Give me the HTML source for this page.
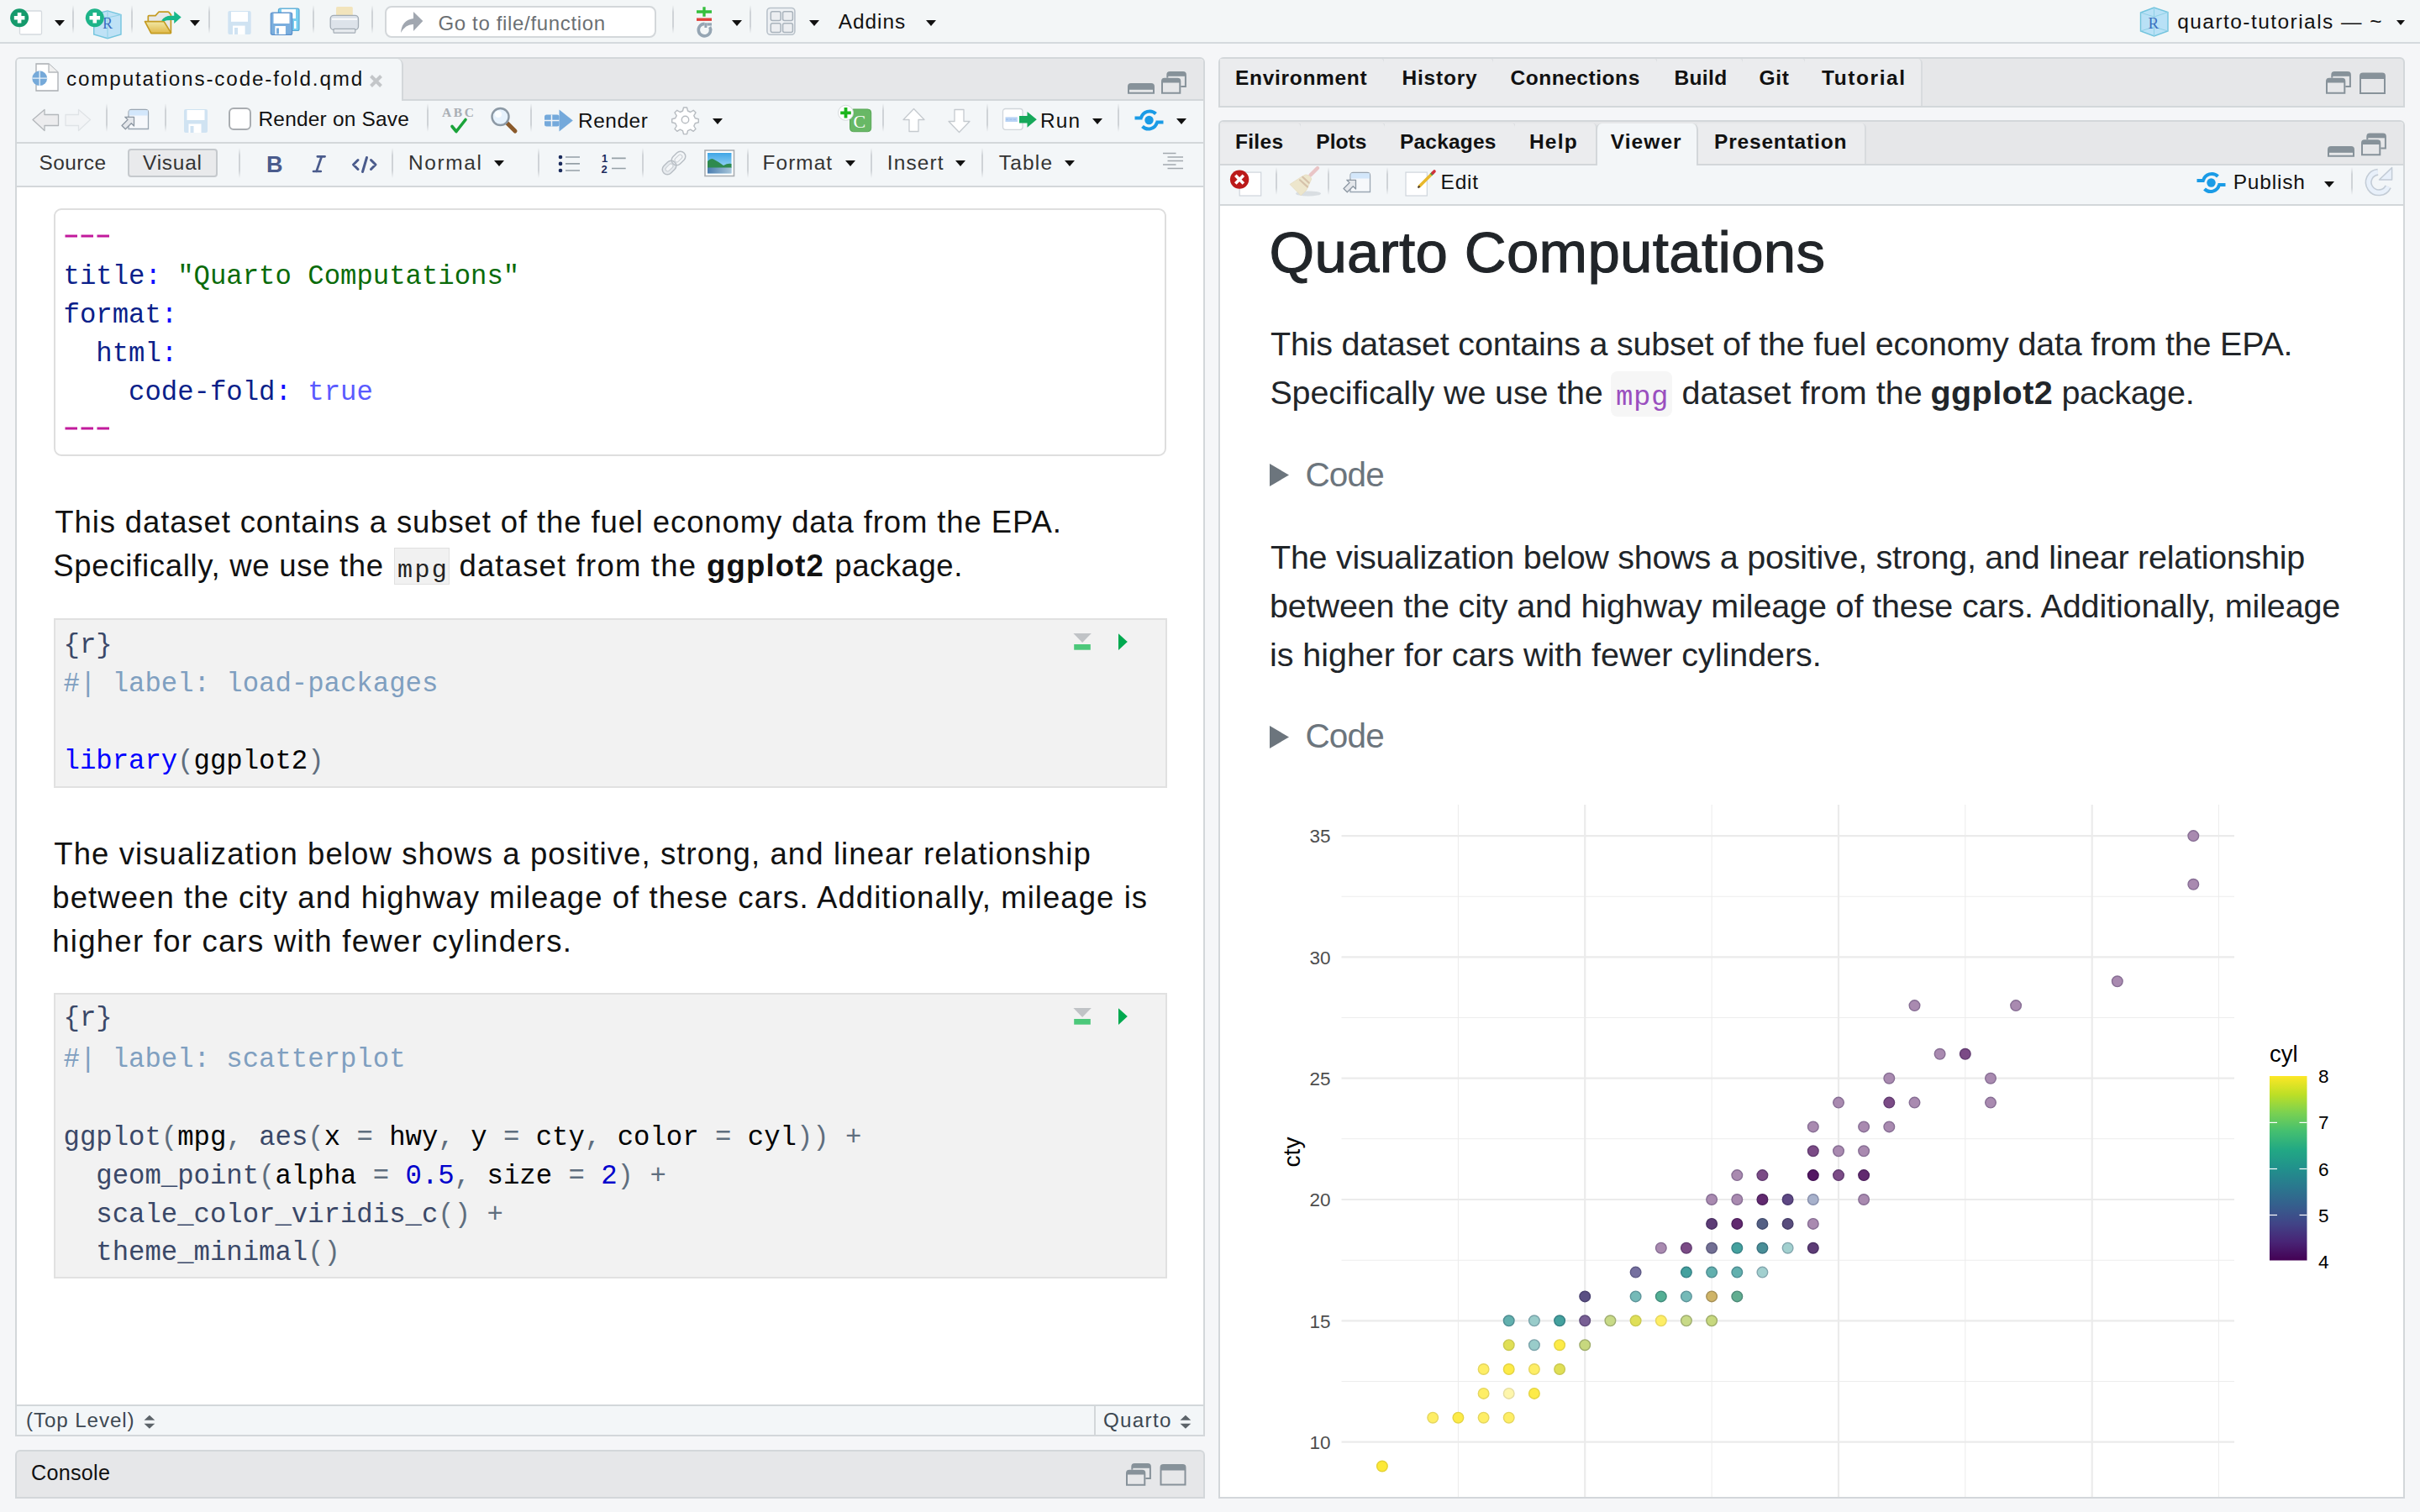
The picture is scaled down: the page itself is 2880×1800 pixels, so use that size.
<!DOCTYPE html>
<html><head><meta charset="utf-8">
<style>
*{margin:0;padding:0;box-sizing:border-box}
html,body{width:2880px;height:1800px;overflow:hidden;background:#f5f6f8;font-family:"Liberation Sans",sans-serif;color:#000}
.a{position:absolute}
.t{position:absolute;white-space:pre;line-height:1}
.code{position:absolute;white-space:pre;line-height:1;font-family:"Liberation Mono",monospace;font-size:32.3px}
.sep{position:absolute;width:2px;background:linear-gradient(rgba(200,204,208,0),#cfd3d7 25%,#cfd3d7 75%,rgba(200,204,208,0))}
.dd{position:absolute;width:0;height:0;border-left:6px solid transparent;border-right:6px solid transparent;border-top:7px solid #111}
.pane{position:absolute;border:2px solid #d3d7da;border-radius:6px 6px 0 0;overflow:hidden}
.strip{position:absolute;background:#e6e7e9}
.tbar{position:absolute;background:#f3f6f8}
.hline{position:absolute;height:2px;background:#d3d7da}
.vline{position:absolute;width:2px;background:#d3d7da}
.tab{position:absolute;background:#ebecee;border-right:2px solid #d8dbde;border-radius:0 5px 0 0}
svg{position:absolute;overflow:visible}
/* yaml/code colors */
.yk{color:#0b1f8a}.yc{color:#1010ff}.ys{color:#0a6b0a}.yt{color:#5a5aff}.yd{color:#c21a9c}
.hd{color:#3a4868}.cm{color:#7f9fc0}.fn{color:#3a4868}.pn{color:#5f6e7e}.kw{color:#0000ff}.nu{color:#0000cc}.tx{color:#000}
</style></head>
<body>
<!-- ================= TOP TOOLBAR ================= -->
<div class="a" style="left:0;top:0;width:2880px;height:50px;background:#f3f6f7"></div>
<div class="a" style="left:0;top:50px;width:2880px;height:2px;background:#d5d9dd"></div>
<div class="sep" style="left:86px;top:6px;height:34px"></div>
<div class="sep" style="left:156px;top:6px;height:34px"></div>
<div class="sep" style="left:248px;top:6px;height:34px"></div>
<div class="sep" style="left:372px;top:6px;height:34px"></div>
<div class="sep" style="left:442px;top:6px;height:34px"></div>
<div class="a" style="left:458px;top:7px;width:323px;height:38px;background:#fff;border:2px solid #d3d7da;border-radius:8px"></div>
<div class="sep" style="left:800px;top:6px;height:34px"></div>
<div class="sep" style="left:892px;top:6px;height:34px"></div>
<div class="dd" style="left:65px;top:24px"></div>
<div class="dd" style="left:226px;top:24px"></div>
<div class="dd" style="left:871px;top:24px"></div>
<div class="dd" style="left:963px;top:24px"></div>
<div class="dd" style="left:1102px;top:24px"></div>
<div class="dd" style="left:2852px;top:24px;border-left-width:5px;border-right-width:5px;border-top-width:6px"></div>
<!--TOPICONS-->

<!-- ================= LEFT PANE ================= -->
<div class="pane" style="left:18px;top:68px;width:1416px;height:1642px;background:#fff">
  <div class="strip" style="left:0;top:0;width:1412px;height:48px"></div>
  <div class="a" style="left:0;top:0;width:460px;height:50px;background:#f3f6f8;border-right:2px solid #d3d7da;border-radius:0 7px 0 0"></div>
  <div class="tbar" style="left:0;top:50px;width:1412px;height:49px"></div>
  <div class="hline" style="left:460px;top:48px;width:952px"></div>
  <div class="hline" style="left:0;top:99px;width:1412px"></div>
  <div class="tbar" style="left:0;top:101px;width:1412px;height:50px"></div>
  <div class="hline" style="left:0;top:151px;width:1412px"></div>
  <div class="hline" style="left:0;top:1602px;width:1412px"></div>
  <div class="tbar" style="left:0;top:1604px;width:1412px;height:36px"></div>
  <div class="vline" style="left:1282px;top:1604px;height:36px"></div>
</div>
<!-- toolbar 1 separators -->
<div class="sep" style="left:126px;top:123px;height:34px"></div>
<div class="sep" style="left:196px;top:123px;height:34px"></div>
<div class="sep" style="left:508px;top:123px;height:34px"></div>
<div class="sep" style="left:631px;top:123px;height:34px"></div>
<div class="sep" style="left:1050px;top:123px;height:34px"></div>
<div class="sep" style="left:1174px;top:123px;height:34px"></div>
<div class="sep" style="left:1330px;top:123px;height:34px"></div>
<div class="dd" style="left:848px;top:141px"></div>
<div class="dd" style="left:1300px;top:141px"></div>
<div class="dd" style="left:1400px;top:141px"></div>
<!-- checkbox -->
<div class="a" style="left:272px;top:128px;width:27px;height:27px;background:#fff;border:2px solid #a9adb1;border-radius:6px"></div>
<!-- toolbar 2 -->
<div class="a" style="left:152px;top:177px;width:107px;height:34px;background:#e9eaec;border:2px solid #c5c9cd;border-radius:4px"></div>
<div class="sep" style="left:284px;top:176px;height:36px"></div>
<div class="sep" style="left:466px;top:176px;height:36px"></div>
<div class="sep" style="left:640px;top:176px;height:36px"></div>
<div class="sep" style="left:764px;top:176px;height:36px"></div>
<div class="sep" style="left:889px;top:176px;height:36px"></div>
<div class="sep" style="left:1036px;top:176px;height:36px"></div>
<div class="sep" style="left:1168px;top:176px;height:36px"></div>
<div class="dd" style="left:588px;top:191px"></div>
<div class="dd" style="left:1006px;top:191px"></div>
<div class="dd" style="left:1137px;top:191px"></div>
<div class="dd" style="left:1267px;top:191px"></div>

<!-- console -->
<div class="pane" style="left:18px;top:1726px;width:1416px;height:58px;background:#e6e7e9;border-bottom:2px solid #d3d7da"></div>

<!-- editor content -->
<div class="a" style="left:64px;top:248px;width:1324px;height:295px;border:2px solid #dedede;border-radius:9px;background:#fff"></div>
<div class="a" style="left:468.5px;top:652px;width:66px;height:44px;background:#f1f1f1;border:1px solid #e0e0e0"></div>
<div class="a" style="left:64px;top:736px;width:1325px;height:202px;background:#f2f2f2;border:2px solid #e1e1e1"></div>
<div class="a" style="left:64px;top:1182px;width:1325px;height:340px;background:#f2f2f2;border:2px solid #e1e1e1"></div>


<div class="code" style="left:75.5px;top:314.3px"><span class="yk">title</span><span class="yc">:</span> <span class="ys">"Quarto Computations"</span></div>
<div class="code" style="left:75.5px;top:360.1px"><span class="yk">format</span><span class="yc">:</span></div>
<div class="code" style="left:75.5px;top:405.9px">  <span class="yk">html</span><span class="yc">:</span></div>
<div class="code" style="left:75.5px;top:451.7px">    <span class="yk">code-fold</span><span class="yc">:</span> <span class="yt">true</span></div>
<svg style="left:0;top:0" width="200" height="600"><path d="M77.5,281 H92 M96.5,281 H111 M115.5,281 H130 M77.5,510 H92 M96.5,510 H111 M115.5,510 H130" stroke="#c21a9c" stroke-width="3.2"/></svg>

<div class="code" style="left:75.5px;top:752.5px"><span class="hd">{r}</span></div>
<div class="code" style="left:75.5px;top:799.2px"><span class="cm">#| label: load-packages</span></div>
<div class="code" style="left:75.5px;top:891.1px"><span class="kw">library</span><span class="pn">(</span><span class="tx">ggplot2</span><span class="pn">)</span></div>

<div class="code" style="left:75.5px;top:1197px"><span class="hd">{r}</span></div>
<div class="code" style="left:75.5px;top:1246.4px"><span class="cm">#| label: scatterplot</span></div>
<div class="code" style="left:75.5px;top:1339.3px"><span class="fn">ggplot</span><span class="pn">(</span><span class="tx">mpg</span><span class="pn">,</span> <span class="fn">aes</span><span class="pn">(</span><span class="tx">x</span> <span class="pn">=</span> <span class="tx">hwy</span><span class="pn">,</span> <span class="tx">y</span> <span class="pn">=</span> <span class="tx">cty</span><span class="pn">,</span> <span class="tx">color</span> <span class="pn">=</span> <span class="tx">cyl</span><span class="pn">))</span> <span class="pn">+</span></div>
<div class="code" style="left:75.5px;top:1385.1px">  <span class="fn">geom_point</span><span class="pn">(</span><span class="tx">alpha</span> <span class="pn">=</span> <span class="nu">0.5</span><span class="pn">,</span> <span class="tx">size</span> <span class="pn">=</span> <span class="nu">2</span><span class="pn">)</span> <span class="pn">+</span></div>
<div class="code" style="left:75.5px;top:1430.7px">  <span class="fn">scale_color_viridis_c</span><span class="pn">()</span> <span class="pn">+</span></div>
<div class="code" style="left:75.5px;top:1476.2px">  <span class="fn">theme_minimal</span><span class="pn">()</span></div>
<!--CHUNKICONS-->

<!-- ================= RIGHT TOP PANE ================= -->
<div class="pane" style="left:1450px;top:68px;width:1412px;height:60px;background:#e6e7e9;border-bottom:2px solid #d3d7da"></div>
<div class="tab" style="left:1452px;top:70px;width:197px;height:56px;border-left:none"></div>
<div class="tab" style="left:1647px;top:70px;width:132px;height:56px"></div>
<div class="tab" style="left:1777px;top:70px;width:197px;height:56px"></div>
<div class="tab" style="left:1972px;top:70px;width:104px;height:56px"></div>
<div class="tab" style="left:2074px;top:70px;width:76px;height:56px"></div>
<div class="tab" style="left:2148px;top:70px;width:140px;height:56px"></div>

<!-- ================= RIGHT BOTTOM PANE ================= -->
<div class="pane" style="left:1450px;top:143px;width:1412px;height:1641px;background:#fff;border-bottom:2px solid #d3d7da">
  <div class="strip" style="left:0;top:0;width:1408px;height:50px"></div>
  <div class="tab" style="left:0;top:2px;width:98px;height:48px;border-left:none"></div>
  <div class="tab" style="left:96px;top:2px;width:102px;height:48px"></div>
  <div class="tab" style="left:196px;top:2px;width:157px;height:48px"></div>
  <div class="tab" style="left:351px;top:2px;width:98px;height:48px"></div>
  <div class="tab" style="left:568px;top:2px;width:201px;height:48px"></div>
  <div class="hline" style="left:0;top:50px;width:447px"></div>
  <div class="hline" style="left:569px;top:50px;width:839px"></div>
  <div class="tbar" style="left:447px;top:2px;width:122px;height:50px;border-left:2px solid #d3d7da;border-right:2px solid #d3d7da;border-radius:7px 7px 0 0"></div>
  <div class="tbar" style="left:0;top:52px;width:1408px;height:46px"></div>
  <div class="hline" style="left:0;top:98px;width:1408px"></div>
</div>
<div class="sep" style="left:1518px;top:199px;height:33px"></div>
<div class="sep" style="left:1580px;top:199px;height:33px"></div>
<div class="sep" style="left:1650px;top:199px;height:33px"></div>
<div class="sep" style="left:2798px;top:199px;height:33px"></div>
<div class="dd" style="left:2766px;top:216px"></div>
<!-- viewer: code bg + triangles -->
<div class="a" style="left:1916.5px;top:442px;width:73px;height:54px;background:#f6f6f6;border-radius:8px"></div>
<svg style="left:1511px;top:552px" width="23" height="27"><polygon points="0,0 23,13.5 0,27" fill="#6c757d"/></svg>
<svg style="left:1511px;top:864px" width="23" height="27"><polygon points="0,0 23,13.5 0,27" fill="#6c757d"/></svg>
<svg style="left:0;top:0" width="2880" height="1800">
<defs><clipPath id="vc"><rect x="1452" y="243" width="1408" height="1539"/></clipPath><linearGradient id="vir" x1="0" y1="1" x2="0" y2="0"><stop offset="0.0" stop-color="#440154"/><stop offset="0.1" stop-color="#482475"/><stop offset="0.2" stop-color="#414487"/><stop offset="0.3" stop-color="#355f8d"/><stop offset="0.4" stop-color="#2a788e"/><stop offset="0.5" stop-color="#21918c"/><stop offset="0.6" stop-color="#22a884"/><stop offset="0.7" stop-color="#44bf70"/><stop offset="0.8" stop-color="#7ad151"/><stop offset="0.9" stop-color="#bddf26"/><stop offset="1.0" stop-color="#fde725"/></linearGradient></defs><g clip-path="url(#vc)">
<line x1="1596.5" x2="2659" y1="1644.5" y2="1644.5" stroke="#ededed" stroke-width="1.1"/>
<line x1="1596.5" x2="2659" y1="1500.2" y2="1500.2" stroke="#ededed" stroke-width="1.1"/>
<line x1="1596.5" x2="2659" y1="1355.8" y2="1355.8" stroke="#ededed" stroke-width="1.1"/>
<line x1="1596.5" x2="2659" y1="1211.5" y2="1211.5" stroke="#ededed" stroke-width="1.1"/>
<line x1="1596.5" x2="2659" y1="1067.2" y2="1067.2" stroke="#ededed" stroke-width="1.1"/>
<line x1="1735.4" x2="1735.4" y1="958" y2="1790" stroke="#ededed" stroke-width="1.1"/>
<line x1="2037.1" x2="2037.1" y1="958" y2="1790" stroke="#ededed" stroke-width="1.1"/>
<line x1="2338.8" x2="2338.8" y1="958" y2="1790" stroke="#ededed" stroke-width="1.1"/>
<line x1="2640.5" x2="2640.5" y1="958" y2="1790" stroke="#ededed" stroke-width="1.1"/>
<line x1="1596.5" x2="2659" y1="1716.6" y2="1716.6" stroke="#ebebeb" stroke-width="2.2"/>
<line x1="1596.5" x2="2659" y1="1572.3" y2="1572.3" stroke="#ebebeb" stroke-width="2.2"/>
<line x1="1596.5" x2="2659" y1="1428.0" y2="1428.0" stroke="#ebebeb" stroke-width="2.2"/>
<line x1="1596.5" x2="2659" y1="1283.7" y2="1283.7" stroke="#ebebeb" stroke-width="2.2"/>
<line x1="1596.5" x2="2659" y1="1139.4" y2="1139.4" stroke="#ebebeb" stroke-width="2.2"/>
<line x1="1596.5" x2="2659" y1="995.1" y2="995.1" stroke="#ebebeb" stroke-width="2.2"/>
<line x1="1886.2" x2="1886.2" y1="958" y2="1790" stroke="#ebebeb" stroke-width="2.2"/>
<line x1="2188.0" x2="2188.0" y1="958" y2="1790" stroke="#ebebeb" stroke-width="2.2"/>
<line x1="2489.7" x2="2489.7" y1="958" y2="1790" stroke="#ebebeb" stroke-width="2.2"/>
<circle cx="1644.9" cy="1745.5" r="6.3" fill="#fde938" stroke="#e4d235" stroke-width="1.4"/>
<circle cx="1705.2" cy="1687.7" r="6.3" fill="#feee65" stroke="#e5d65f" stroke-width="1.4"/>
<circle cx="1735.4" cy="1687.7" r="6.3" fill="#fdeb47" stroke="#e4d443" stroke-width="1.4"/>
<circle cx="1765.6" cy="1687.7" r="6.3" fill="#feee65" stroke="#e5d65f" stroke-width="1.4"/>
<circle cx="1795.7" cy="1687.7" r="6.3" fill="#feee65" stroke="#e5d65f" stroke-width="1.4"/>
<circle cx="1765.6" cy="1658.9" r="6.3" fill="#feee65" stroke="#e5d65f" stroke-width="1.4"/>
<circle cx="1795.7" cy="1658.9" r="6.3" fill="#fef6ac" stroke="#e5dda2" stroke-width="1.4"/>
<circle cx="1825.9" cy="1658.9" r="6.3" fill="#fdeb47" stroke="#e4d443" stroke-width="1.4"/>
<circle cx="1765.6" cy="1630.0" r="6.3" fill="#feee65" stroke="#e5d65f" stroke-width="1.4"/>
<circle cx="1795.7" cy="1630.0" r="6.3" fill="#fdeb47" stroke="#e4d443" stroke-width="1.4"/>
<circle cx="1825.9" cy="1630.0" r="6.3" fill="#feee65" stroke="#e5d65f" stroke-width="1.4"/>
<circle cx="1856.1" cy="1630.0" r="6.3" fill="#e0df55" stroke="#cac950" stroke-width="1.4"/>
<circle cx="1795.7" cy="1601.2" r="6.3" fill="#e0df55" stroke="#cac950" stroke-width="1.4"/>
<circle cx="1825.9" cy="1601.2" r="6.3" fill="#99ccca" stroke="#7aa3aa" stroke-width="1.4"/>
<circle cx="1856.1" cy="1601.2" r="6.3" fill="#fdeb47" stroke="#e4d443" stroke-width="1.4"/>
<circle cx="1886.2" cy="1601.2" r="6.3" fill="#c7d87e" stroke="#9fad6a" stroke-width="1.4"/>
<circle cx="1795.7" cy="1572.3" r="6.3" fill="#62b0ae" stroke="#4e8d92" stroke-width="1.4"/>
<circle cx="1825.9" cy="1572.3" r="6.3" fill="#99ccca" stroke="#7aa3aa" stroke-width="1.4"/>
<circle cx="1856.1" cy="1572.3" r="6.3" fill="#44a19e" stroke="#368185" stroke-width="1.4"/>
<circle cx="1886.2" cy="1572.3" r="6.3" fill="#785f94" stroke="#604c7c" stroke-width="1.4"/>
<circle cx="1916.4" cy="1572.3" r="6.3" fill="#c8da87" stroke="#a0ae71" stroke-width="1.4"/>
<circle cx="1946.6" cy="1572.3" r="6.3" fill="#dfdf57" stroke="#c9c952" stroke-width="1.4"/>
<circle cx="1976.8" cy="1572.3" r="6.3" fill="#feee65" stroke="#e5d65f" stroke-width="1.4"/>
<circle cx="2006.9" cy="1572.3" r="6.3" fill="#c8da87" stroke="#a0ae71" stroke-width="1.4"/>
<circle cx="2037.1" cy="1572.3" r="6.3" fill="#c7d87e" stroke="#9fad6a" stroke-width="1.4"/>
<circle cx="1886.2" cy="1543.4" r="6.3" fill="#5b5084" stroke="#49406f" stroke-width="1.4"/>
<circle cx="1946.6" cy="1543.4" r="6.3" fill="#75bab8" stroke="#5e959b" stroke-width="1.4"/>
<circle cx="1976.8" cy="1543.4" r="6.3" fill="#53af94" stroke="#428c7c" stroke-width="1.4"/>
<circle cx="2006.9" cy="1543.4" r="6.3" fill="#75bab8" stroke="#5e959b" stroke-width="1.4"/>
<circle cx="2037.1" cy="1543.4" r="6.3" fill="#cfb467" stroke="#a69057" stroke-width="1.4"/>
<circle cx="2067.3" cy="1543.4" r="6.3" fill="#61ad90" stroke="#4e8a79" stroke-width="1.4"/>
<circle cx="1946.6" cy="1514.6" r="6.3" fill="#76709f" stroke="#5e5a86" stroke-width="1.4"/>
<circle cx="2006.9" cy="1514.6" r="6.3" fill="#44a19e" stroke="#368185" stroke-width="1.4"/>
<circle cx="2037.1" cy="1514.6" r="6.3" fill="#62b0ae" stroke="#4e8d92" stroke-width="1.4"/>
<circle cx="2067.3" cy="1514.6" r="6.3" fill="#62b0ae" stroke="#4e8d92" stroke-width="1.4"/>
<circle cx="2097.4" cy="1514.6" r="6.3" fill="#a2d0cf" stroke="#82a6ae" stroke-width="1.4"/>
<circle cx="1976.8" cy="1485.7" r="6.3" fill="#a98ab0" stroke="#876e94" stroke-width="1.4"/>
<circle cx="2006.9" cy="1485.7" r="6.3" fill="#7b4b86" stroke="#623c71" stroke-width="1.4"/>
<circle cx="2037.1" cy="1485.7" r="6.3" fill="#726f94" stroke="#5b597c" stroke-width="1.4"/>
<circle cx="2067.3" cy="1485.7" r="6.3" fill="#44a19e" stroke="#368185" stroke-width="1.4"/>
<circle cx="2097.4" cy="1485.7" r="6.3" fill="#498e97" stroke="#3a727f" stroke-width="1.4"/>
<circle cx="2127.6" cy="1485.7" r="6.3" fill="#a2d0cf" stroke="#82a6ae" stroke-width="1.4"/>
<circle cx="2157.8" cy="1485.7" r="6.3" fill="#5d3c76" stroke="#4a3063" stroke-width="1.4"/>
<circle cx="2037.1" cy="1456.9" r="6.3" fill="#5d3c76" stroke="#4a3063" stroke-width="1.4"/>
<circle cx="2067.3" cy="1456.9" r="6.3" fill="#61296f" stroke="#4e215d" stroke-width="1.4"/>
<circle cx="2097.4" cy="1456.9" r="6.3" fill="#546084" stroke="#434d6f" stroke-width="1.4"/>
<circle cx="2127.6" cy="1456.9" r="6.3" fill="#594d7d" stroke="#473e69" stroke-width="1.4"/>
<circle cx="2157.8" cy="1456.9" r="6.3" fill="#a98ab0" stroke="#876e94" stroke-width="1.4"/>
<circle cx="2037.1" cy="1428.0" r="6.3" fill="#a98ab0" stroke="#876e94" stroke-width="1.4"/>
<circle cx="2067.3" cy="1428.0" r="6.3" fill="#a98ab0" stroke="#876e94" stroke-width="1.4"/>
<circle cx="2097.4" cy="1428.0" r="6.3" fill="#61296f" stroke="#4e215d" stroke-width="1.4"/>
<circle cx="2127.6" cy="1428.0" r="6.3" fill="#5e4884" stroke="#4b3a6f" stroke-width="1.4"/>
<circle cx="2157.8" cy="1428.0" r="6.3" fill="#a7b1cb" stroke="#868eab" stroke-width="1.4"/>
<circle cx="2218.1" cy="1428.0" r="6.3" fill="#a98ab0" stroke="#876e94" stroke-width="1.4"/>
<circle cx="2067.3" cy="1399.1" r="6.3" fill="#a98ab0" stroke="#876e94" stroke-width="1.4"/>
<circle cx="2097.4" cy="1399.1" r="6.3" fill="#7b4b86" stroke="#623c71" stroke-width="1.4"/>
<circle cx="2157.8" cy="1399.1" r="6.3" fill="#541763" stroke="#431253" stroke-width="1.4"/>
<circle cx="2188.0" cy="1399.1" r="6.3" fill="#7b4b86" stroke="#623c71" stroke-width="1.4"/>
<circle cx="2218.1" cy="1399.1" r="6.3" fill="#61296f" stroke="#4e215d" stroke-width="1.4"/>
<circle cx="2157.8" cy="1370.3" r="6.3" fill="#7b4b86" stroke="#623c71" stroke-width="1.4"/>
<circle cx="2188.0" cy="1370.3" r="6.3" fill="#a98ab0" stroke="#876e94" stroke-width="1.4"/>
<circle cx="2218.1" cy="1370.3" r="6.3" fill="#a98ab0" stroke="#876e94" stroke-width="1.4"/>
<circle cx="2157.8" cy="1341.4" r="6.3" fill="#a98ab0" stroke="#876e94" stroke-width="1.4"/>
<circle cx="2218.1" cy="1341.4" r="6.3" fill="#a98ab0" stroke="#876e94" stroke-width="1.4"/>
<circle cx="2248.3" cy="1341.4" r="6.3" fill="#a98ab0" stroke="#876e94" stroke-width="1.4"/>
<circle cx="2188.0" cy="1312.6" r="6.3" fill="#a98ab0" stroke="#876e94" stroke-width="1.4"/>
<circle cx="2248.3" cy="1312.6" r="6.3" fill="#7b4b86" stroke="#623c71" stroke-width="1.4"/>
<circle cx="2278.5" cy="1312.6" r="6.3" fill="#a98ab0" stroke="#876e94" stroke-width="1.4"/>
<circle cx="2369.0" cy="1312.6" r="6.3" fill="#a98ab0" stroke="#876e94" stroke-width="1.4"/>
<circle cx="2248.3" cy="1283.7" r="6.3" fill="#a98ab0" stroke="#876e94" stroke-width="1.4"/>
<circle cx="2369.0" cy="1283.7" r="6.3" fill="#a98ab0" stroke="#876e94" stroke-width="1.4"/>
<circle cx="2308.6" cy="1254.8" r="6.3" fill="#a98ab0" stroke="#876e94" stroke-width="1.4"/>
<circle cx="2338.8" cy="1254.8" r="6.3" fill="#7b4b86" stroke="#623c71" stroke-width="1.4"/>
<circle cx="2278.5" cy="1197.1" r="6.3" fill="#a98ab0" stroke="#876e94" stroke-width="1.4"/>
<circle cx="2399.1" cy="1197.1" r="6.3" fill="#a98ab0" stroke="#876e94" stroke-width="1.4"/>
<circle cx="2519.8" cy="1168.3" r="6.3" fill="#a98ab0" stroke="#876e94" stroke-width="1.4"/>
<circle cx="2610.3" cy="1052.8" r="6.3" fill="#a98ab0" stroke="#876e94" stroke-width="1.4"/>
<circle cx="2610.3" cy="995.1" r="6.3" fill="#a98ab0" stroke="#876e94" stroke-width="1.4"/>
</g>
<text x="1583.5" y="1724.8" text-anchor="end" font-family="Liberation Sans" font-size="22.5" fill="#4d4d4d">10</text>
<text x="1583.5" y="1580.5" text-anchor="end" font-family="Liberation Sans" font-size="22.5" fill="#4d4d4d">15</text>
<text x="1583.5" y="1436.2" text-anchor="end" font-family="Liberation Sans" font-size="22.5" fill="#4d4d4d">20</text>
<text x="1583.5" y="1291.9" text-anchor="end" font-family="Liberation Sans" font-size="22.5" fill="#4d4d4d">25</text>
<text x="1583.5" y="1147.6" text-anchor="end" font-family="Liberation Sans" font-size="22.5" fill="#4d4d4d">30</text>
<text x="1583.5" y="1003.3" text-anchor="end" font-family="Liberation Sans" font-size="22.5" fill="#4d4d4d">35</text>
<text transform="translate(1546.5,1371.5) rotate(-90)" text-anchor="middle" font-family="Liberation Sans" font-size="28" fill="#000">cty</text>
<text x="2701" y="1264" font-family="Liberation Sans" font-size="27.5" fill="#000">cyl</text>
<rect x="2701" y="1281" width="44.5" height="219.5" fill="url(#vir)"/>
<text x="2759" y="1289.4" font-family="Liberation Sans" font-size="22.5" fill="#000">8</text>
<text x="2759" y="1344.4" font-family="Liberation Sans" font-size="22.5" fill="#000">7</text>
<line x1="2701" x2="2710" y1="1336.4" y2="1336.4" stroke="#fff" stroke-width="1.2"/><line x1="2736.5" x2="2745.5" y1="1336.4" y2="1336.4" stroke="#fff" stroke-width="1.2"/>
<text x="2759" y="1399.5" font-family="Liberation Sans" font-size="22.5" fill="#000">6</text>
<line x1="2701" x2="2710" y1="1391.5" y2="1391.5" stroke="#fff" stroke-width="1.2"/><line x1="2736.5" x2="2745.5" y1="1391.5" y2="1391.5" stroke="#fff" stroke-width="1.2"/>
<text x="2759" y="1454.5" font-family="Liberation Sans" font-size="22.5" fill="#000">5</text>
<line x1="2701" x2="2710" y1="1446.5" y2="1446.5" stroke="#fff" stroke-width="1.2"/><line x1="2736.5" x2="2745.5" y1="1446.5" y2="1446.5" stroke="#fff" stroke-width="1.2"/>
<text x="2759" y="1509.5" font-family="Liberation Sans" font-size="22.5" fill="#000">4</text>
</svg>
<svg style="left:10px;top:8px" width="42" height="36" viewBox="0 0 42 36"><rect x="13.5" y="5" width="26" height="28" rx="1.5" fill="#fff" stroke="#d5dadf" stroke-width="1.3"/><circle cx="13.1" cy="13.3" r="11" fill="#159a6c"/><path d="M13.1,7 V19.6 M6.8,13.3 H19.4" stroke="#fff" stroke-width="4.6"/></svg>
<svg style="left:100px;top:8px" width="48" height="40" viewBox="0 0 48 40"><path d="M11.7,9 L28,4.9 L44,9.5 V33 L28,37.7 L11.7,33 Z" fill="#bfe2f6" stroke="#74c5de" stroke-width="1.4"/><path d="M28,4.9 V37.7 M11.7,9 L28,13 L44,9.5" fill="none" stroke="#8fd0e6" stroke-width="1"/><text x="22" y="26" font-family="Liberation Serif" font-size="18" fill="#3b6fbf">R</text><circle cx="12.8" cy="13.3" r="11" fill="#1db489"/><path d="M12.8,7 V19.6 M6.5,13.3 H19.1" stroke="#fff" stroke-width="4.6"/></svg>
<svg style="left:170px;top:10px" width="50" height="34" viewBox="0 0 50 34"><defs><linearGradient id="fld" x1="0" y1="0" x2="0" y2="1"><stop offset="0" stop-color="#f1e8a6"/><stop offset="1" stop-color="#e0b848"/></linearGradient></defs><path d="M6.3,15.1 V9.6 Q6.3,8.6 7.3,8.6 H15 L18.9,4.2 H30 Q30.6,4.2 31,4.6 L33.4,7.5 V28.9" fill="#e7e8e8" stroke="#c49b22" stroke-width="1.7" stroke-linejoin="round"/><path d="M2.5,15.6 H25.1 L33.4,28.9 Q33.4,29.7 32.4,29.7 H10.4 Q9.8,29.7 9.6,29.2 Z" fill="url(#fld)" stroke="#c49b22" stroke-width="1.7" stroke-linejoin="round"/><path d="M22.1,14.6 Q26,8.8 33.2,8.8 H37.2 V3.5 L45.7,10.6 L37.2,18.1 V14.1 H33.2 Q28,14.1 25.1,15.3 Z" fill="#17b88a"/></svg>
<svg style="left:270px;top:12px" width="30" height="30" viewBox="0 0 30 30"><rect x="1.3" y="1" width="27.4" height="28" rx="2" fill="#d0e3f2"/><rect x="5" y="2" width="20" height="11.8" fill="#fff"/><rect x="7" y="18.6" width="14.6" height="10.4" fill="#fff"/><rect x="9" y="21" width="4" height="8" fill="#d0e3f2"/></svg>
<svg style="left:320px;top:9px" width="40" height="34" viewBox="0 0 40 34"><rect x="11.4" y="1.2" width="24.6" height="26.3" rx="2" fill="#78cff0" stroke="#5aa9d3" stroke-width="1.2"/><rect x="15" y="2" width="17" height="11" fill="#fff"/><rect x="30" y="16" width="2.5" height="9" fill="#fff"/><rect x="2.3" y="6" width="25.3" height="26.4" rx="2" fill="#7aaede" stroke="#5a8fca" stroke-width="1.2"/><rect x="5.5" y="7" width="19" height="12" fill="#fff"/><rect x="7.4" y="22" width="12.5" height="10" fill="#fff"/><rect x="9" y="24.5" width="3" height="7" fill="#7aaede"/></svg>
<svg style="left:390px;top:6px" width="40" height="36" viewBox="0 0 40 36"><rect x="10" y="2" width="19.8" height="16" rx="1.5" fill="#f2e4bc"/><rect x="3.2" y="12.3" width="33.3" height="17.2" rx="4" fill="#dde3ea" stroke="#a3acb5" stroke-width="1.3"/><rect x="5" y="16" width="30" height="1.6" fill="#fff"/><rect x="7" y="28.4" width="25.8" height="4.8" rx="1" fill="#e6eaee" stroke="#a3acb5" stroke-width="1.2"/></svg>
<svg style="left:474px;top:11px" width="32" height="30" viewBox="0 0 32 30"><path d="M3,28 Q4,13 18,11 V3 L29.3,14 L18,26 V18 Q9,17.5 3,28 Z" fill="#a1a7b0"/></svg>
<svg style="left:824px;top:6px" width="28" height="40" viewBox="0 0 28 40"><path d="M14,2.3 V13.8 M5,8 H23" stroke="#35bf3d" stroke-width="3.3"/><rect x="5" y="15.5" width="18" height="3.4" fill="#e0413a"/><path d="M14.5,22.4 A7.2,7.2 0 1 0 20.7,26" fill="none" stroke="#95a5b3" stroke-width="3.6"/><rect x="17.4" y="21.3" width="5.6" height="3.3" fill="#95a5b3"/><rect x="14.4" y="21.3" width="3" height="5.7" fill="#95a5b3"/></svg>
<svg style="left:910px;top:7px" width="40" height="37" viewBox="0 0 40 37"><rect x="2.9" y="2.5" width="33" height="31.8" rx="4" fill="#eef1f4" stroke="#b9c2ca" stroke-width="1.6"/><rect x="7.3" y="6.8" width="11.8" height="10.6" rx="2" fill="#eceef1" stroke="#a9b3bc" stroke-width="1.5"/><rect x="21.6" y="6.8" width="11.8" height="10.6" rx="2" fill="#eceef1" stroke="#a9b3bc" stroke-width="1.5"/><rect x="7.3" y="20.8" width="11.8" height="10.6" rx="2" fill="#eceef1" stroke="#a9b3bc" stroke-width="1.5"/><rect x="21.6" y="20.8" width="11.8" height="10.6" rx="2" fill="#eceef1" stroke="#a9b3bc" stroke-width="1.5"/></svg>
<svg style="left:2545px;top:7px" width="38" height="38" viewBox="0 0 38 38"><path d="M2.5,8 L18.5,2 L35,7.5 V30 L18.5,36 L2.5,30 Z" fill="#b9e1f6" stroke="#72c4dd" stroke-width="1.4"/><path d="M18.5,2 V36 M2.5,8 L18.5,13 L35,7.5 M2.5,30 L18.5,25 L35,30" fill="none" stroke="#8fd0e6" stroke-width="1"/><text x="11.5" y="27" font-family="Liberation Serif" font-size="19" fill="#3b6fbf">R</text></svg>
<svg style="left:40px;top:74px" width="34" height="38" viewBox="0 0 34 38"><path d="M3,2 H18 L29,12 V34 H3 Z" fill="#fff" stroke="#a9adb1" stroke-width="1.3"/><path d="M18,2 V12 H29" fill="#f0f0f0" stroke="#b5b9bd" stroke-width="1.3"/><circle cx="7.2" cy="19.2" r="8.9" fill="#75a9d9"/><path d="M7.2,10.3 V28.1 M-1.7,19.2 H16.1" stroke="#e8f1fa" stroke-width="1.3"/></svg>
<svg style="left:438px;top:87px" width="20" height="20" viewBox="0 0 20 20"><path d="M3.5,3.5 L15.5,15.5 M15.5,3.5 L3.5,15.5" stroke="#c3c6c9" stroke-width="4"/></svg>
<svg style="left:1340px;top:83px" width="75" height="32" viewBox="0 0 75 32"><path d="M3,27.7 V20 Q3,17 6,17 H30 Q33,17 33,20 V27.7 Z" fill="none" stroke="#87929a" stroke-width="2"/><rect x="3" y="17.2" width="30" height="6.6" fill="#87929a"/><path d="M49.3,20 V6 Q49.3,3 52.3,3 H67.9 Q70.9,3 70.9,6 V20 Z" fill="#e6e7e9" stroke="#87929a" stroke-width="2"/><rect x="49.3" y="3.2" width="21.6" height="4.6" fill="#87929a"/><rect x="42" y="9.7" width="23.3" height="19.1" fill="#e6e7e9"/><path d="M43,27.8 V13.7 Q43,10.7 46,10.7 H61.3 Q64.3,10.7 64.3,13.7 V27.8 Z" fill="#e6e7e9" stroke="#87929a" stroke-width="2"/><rect x="43" y="10.899999999999999" width="21.3" height="4.6" fill="#87929a"/></svg>
<svg style="left:36px;top:129px" width="76" height="31" viewBox="0 0 76 31"><path d="M3,13.5 L17,1.5 V7.5 H33.5 V20.5 H17 V26.5 Z" fill="#ececee" stroke="#b3b7bb" stroke-width="1.3" stroke-linejoin="round"/><path d="M71.5,13.5 L57.5,1.5 V7.5 H42 V20.5 H57.5 V26.5 Z" fill="#f2f4f6" stroke="#dfe3e6" stroke-width="1.3" stroke-linejoin="round"/></svg>
<svg style="left:144px;top:130px" width="36" height="27" viewBox="0 0 36 27"><path d="M9,23.5 V4 Q9,0.5 12.5,0.5 H29 Q32.5,0.5 32.5,4 V23.5 Z" fill="#f6f8fb" stroke="#9aa6b2" stroke-width="1.3"/><path d="M9.6,1.2 H32 V7.5 H9.6 Z" fill="#d3e7fb"/><path d="M1,19.5 L8,12.5 L4.8,9.3 H15.5 V20 L12.3,16.8 L5.3,23.8 Z" fill="#e4e7eb" stroke="#8d98a3" stroke-width="1.3" stroke-linejoin="round"/></svg>
<svg style="left:218px;top:129px" width="30" height="30" viewBox="0 0 30 30"><rect x="1" y="1" width="28" height="28" rx="2" fill="#d0e3f2"/><rect x="4.5" y="2" width="21" height="12" fill="#fff"/><rect x="6.5" y="18.5" width="15" height="10.5" fill="#fff"/><rect x="8.5" y="21" width="4" height="8" fill="#d0e3f2"/></svg>
<svg style="left:524px;top:125px" width="44" height="35" viewBox="0 0 44 35"><text x="2" y="14" font-family="Liberation Serif" font-weight="bold" font-size="15.5" fill="#a9aeb4" textLength="38">ABC</text><path d="M14,25.5 L19,31.5 L30,17.5" fill="none" stroke="#1aa33a" stroke-width="3.6" stroke-linecap="round" stroke-linejoin="round"/></svg>
<svg style="left:582px;top:126px" width="38" height="34" viewBox="0 0 38 34"><path d="M20,19 L31,30" stroke="#8a5a2b" stroke-width="5" stroke-linecap="round"/><circle cx="13.5" cy="13" r="10" fill="#e6f2fd" stroke="#8c99a5" stroke-width="2.4"/><circle cx="11" cy="10" r="4" fill="#fff" opacity="0.8"/></svg>
<svg style="left:646px;top:129px" width="38" height="30" viewBox="0 0 38 30"><rect x="2" y="7.5" width="17.5" height="14" rx="2.5" fill="#74a9db"/><path d="M2,14.5 H20 M10.5,7.5 V21.5" stroke="#f4f6f8" stroke-width="1.5"/><path d="M19.5,1.5 L35.8,14.5 L19.5,27.5 Z" fill="#74a9db"/></svg>
<svg style="left:798px;top:126px" width="36" height="33" viewBox="0 0 36 33"><path d="M15.5,2 h4 l1,4 l3.2,1.5 l3.5,-2.2 l2.8,2.8 l-2.2,3.5 l1.5,3.2 l4,1 v4 l-4,1 l-1.5,3.2 l2.2,3.5 l-2.8,2.8 l-3.5,-2.2 l-3.2,1.5 l-1,4 h-4 l-1,-4 l-3.2,-1.5 l-3.5,2.2 l-2.8,-2.8 l2.2,-3.5 l-1.5,-3.2 l-4,-1 v-4 l4,-1 l1.5,-3.2 l-2.2,-3.5 l2.8,-2.8 l3.5,2.2 l3.2,-1.5 Z" fill="#fff" stroke="#b7bcc1" stroke-width="1.4" stroke-linejoin="round"/><circle cx="17.5" cy="16.5" r="4.2" fill="none" stroke="#b7bcc1" stroke-width="1.4"/></svg>
<svg style="left:995px;top:123px" width="44" height="36" viewBox="0 0 44 36"><rect x="16.5" y="7" width="25.2" height="26.7" rx="4" fill="#68b866" stroke="#57a655" stroke-width="1"/><text x="20.5" y="29" font-family="Liberation Serif" font-size="22" fill="#fff">C</text><circle cx="11.5" cy="11.3" r="9" fill="#fff" stroke="#d5d9dc" stroke-width="1"/><path d="M11.5,5 V17.6 M5.2,11.3 H17.8" stroke="#1cb51c" stroke-width="3.8"/></svg>
<svg style="left:1073px;top:128px" width="30" height="31" viewBox="0 0 30 31"><path d="M14.5,1.5 L27,14.5 H20 V28.5 H9 V14.5 H2 Z" fill="#fff" stroke="#c5cacf" stroke-width="1.3" stroke-linejoin="round"/></svg>
<svg style="left:1127px;top:128px" width="30" height="31" viewBox="0 0 30 31"><path d="M14.5,29.5 L27,16.5 H20 V2.5 H9 V16.5 H2 Z" fill="#fff" stroke="#c5cacf" stroke-width="1.3" stroke-linejoin="round"/></svg>
<svg style="left:1191px;top:127px" width="46" height="30" viewBox="0 0 46 30"><rect x="2.5" y="2.5" width="23.5" height="24.8" rx="3" fill="#fff" stroke="#d0d5da" stroke-width="1.3"/><rect x="5.5" y="12.4" width="14.4" height="5.6" fill="#b8d3f5"/><path d="M6,15.2 H19" stroke="#9cbdea" stroke-width="1" stroke-dasharray="3,1.5"/><path d="M22,11 H31.5 V6 L42.8,15.3 L31.5,24.8 V19.6 H22 Z" fill="#16a85a"/></svg>
<svg style="left:1349px;top:129px" width="40" height="30" viewBox="0 0 40 30"><g transform="translate(0.5,1) scale(1.0)"><circle cx="18" cy="13" r="5.2" fill="#1a9be6"/><path d="M8.5,10.5 A10.5,10.5 0 0 1 26,5.5" fill="none" stroke="#1a9be6" stroke-width="4"/><path d="M1,10.5 H10" stroke="#1a9be6" stroke-width="4"/><path d="M27.5,15.5 A10.5,10.5 0 0 1 10,20.5" fill="none" stroke="#1a9be6" stroke-width="4"/><path d="M26,15.5 H35" stroke="#1a9be6" stroke-width="4"/></g></svg>
<svg style="left:314px;top:182px" width="140" height="28" viewBox="0 0 140 28"><text x="3" y="22.5" font-family="Liberation Sans" font-weight="bold" font-size="27" fill="#4a5b8c">B</text><path d="M63.8,4.3 H72.6 M68.8,4.3 L62.6,22 M59,22 H67.8" fill="none" stroke="#4a5b8c" stroke-width="2.7" stroke-linecap="round"/><path d="M112,8.5 L106.5,14 L112,19.5 M127.5,8.5 L133,14 L127.5,19.5 M122.5,5.5 L117.5,22.5" fill="none" stroke="#4a5b8c" stroke-width="3" stroke-linecap="round" stroke-linejoin="round"/></svg>
<svg style="left:662px;top:180px" width="88" height="30" viewBox="0 0 88 30"><circle cx="5" cy="7" r="2.3" fill="#1b2b5c"/><circle cx="5" cy="14.9" r="2.3" fill="#1b2b5c"/><circle cx="5" cy="23" r="2.3" fill="#1b2b5c"/><path d="M11,7 H28 M11,14.9 H28 M11,23 H28" stroke="#95a0a6" stroke-width="1.7"/><text x="54" y="13.3" font-family="Liberation Sans" font-weight="bold" font-size="13" fill="#1b2b5c">1</text><text x="53.5" y="26.3" font-family="Liberation Sans" font-weight="bold" font-size="13" fill="#1b2b5c">2</text><path d="M66,8.3 H82.7 M66,20.5 H82.7" stroke="#95a0a6" stroke-width="1.7"/></svg>
<svg style="left:786px;top:178px" width="34" height="34" viewBox="0 0 34 34"><g transform="rotate(-45 16 16)"><rect x="-1" y="10" width="18.5" height="12" rx="6" fill="#e6eaee" stroke="#b9bfc5" stroke-width="1.5"/><rect x="14.5" y="10" width="18.5" height="12" rx="6" fill="none" stroke="#b9bfc5" stroke-width="1.5"/><rect x="3" y="13.5" width="10.5" height="5" rx="2.5" fill="#f4f6f8" stroke="#c9ced3" stroke-width="1"/><rect x="18.5" y="13.5" width="10.5" height="5" rx="2.5" fill="#f4f6f8" stroke="#c9ced3" stroke-width="1"/></g></svg>
<svg style="left:836px;top:176px" width="40" height="36" viewBox="0 0 40 36"><defs><linearGradient id="sky" x1="0" y1="0" x2="0" y2="1"><stop offset="0" stop-color="#3fa6e6"/><stop offset="1" stop-color="#bfe8fb"/></linearGradient><linearGradient id="wat" x1="0" y1="0" x2="1" y2="0"><stop offset="0" stop-color="#4a7db0"/><stop offset="1" stop-color="#a9c6da"/></linearGradient></defs><rect x="3" y="3" width="34.5" height="30.5" fill="#fff" stroke="#a9adb2" stroke-width="1.6"/><rect x="6" y="6" width="28.5" height="24.5" fill="url(#sky)"/><path d="M6,16 Q10,12 13,13.5 Q19,16.5 25,21 Q30,18 34.5,19 V24 H6 Z" fill="#2f8a4e"/><rect x="6" y="23.5" width="28.5" height="7" fill="url(#wat)"/></svg>
<svg style="left:1382px;top:180px" width="30" height="25" viewBox="0 0 30 25"><path d="M2,2.5 H17.5 M7.5,7 H26 M7.5,11.5 H26 M2,16 H17.5 M7.5,20.5 H26" stroke="#a2a9ae" stroke-width="1.7"/></svg>
<svg style="left:168px;top:1682px" width="20" height="20" viewBox="0 0 20 20"><path d="M3.5,8.7 L9.9,2.7 L16.3,8.7 Z M3.5,12.7 L9.9,18.7 L16.3,12.7 Z" fill="#5c6369"/></svg>
<svg style="left:1401px;top:1682px" width="22" height="20" viewBox="0 0 22 20"><path d="M3.5,8.7 L9.9,2.7 L16.3,8.7 Z M3.5,12.7 L9.9,18.7 L16.3,12.7 Z" fill="#5c6369"/></svg>
<svg style="left:1338px;top:1740px" width="76" height="31" viewBox="0 0 76 31"><path d="M9.3,20 V6 Q9.3,3 12.3,3 H27.900000000000002 Q30.900000000000002,3 30.900000000000002,6 V20 Z" fill="#e6e7e9" stroke="#87929a" stroke-width="2"/><rect x="9.3" y="3.2" width="21.6" height="4.6" fill="#87929a"/><rect x="2" y="9.7" width="23.3" height="19.1" fill="#e6e7e9"/><path d="M3,27.8 V13.7 Q3,10.7 6,10.7 H21.3 Q24.3,10.7 24.3,13.7 V27.8 Z" fill="#e6e7e9" stroke="#87929a" stroke-width="2"/><rect x="3" y="10.899999999999999" width="21.3" height="4.6" fill="#87929a"/><path d="M43.5,27.5 V7 Q43.5,4 46.5,4 H69.5 Q72.5,4 72.5,7 V27.5 Z" fill="none" stroke="#87929a" stroke-width="2"/><rect x="43.5" y="4.2" width="29" height="6.3" fill="#87929a"/></svg>
<svg style="left:1275px;top:752px" width="70" height="24" viewBox="0 0 70 24"><path d="M2.4,2 H23.8 L13.1,13 Z" fill="#c0c3c6"/><rect x="3.2" y="15" width="19.6" height="6.7" fill="#4cc87a"/><path d="M56,2.3 L66.8,12.1 L56,21.9 Z" fill="#00a94f"/></svg>
<svg style="left:1275px;top:1198px" width="70" height="24" viewBox="0 0 70 24"><path d="M2.4,2 H23.8 L13.1,13 Z" fill="#c0c3c6"/><rect x="3.2" y="15" width="19.6" height="6.7" fill="#4cc87a"/><path d="M56,2.3 L66.8,12.1 L56,21.9 Z" fill="#00a94f"/></svg>
<svg style="left:2766px;top:83px" width="76" height="31" viewBox="0 0 76 31"><path d="M9.3,20 V6 Q9.3,3 12.3,3 H27.900000000000002 Q30.900000000000002,3 30.900000000000002,6 V20 Z" fill="#e6e7e9" stroke="#87929a" stroke-width="2"/><rect x="9.3" y="3.2" width="21.6" height="4.6" fill="#87929a"/><rect x="2" y="9.7" width="23.3" height="19.1" fill="#e6e7e9"/><path d="M3,27.8 V13.7 Q3,10.7 6,10.7 H21.3 Q24.3,10.7 24.3,13.7 V27.8 Z" fill="#e6e7e9" stroke="#87929a" stroke-width="2"/><rect x="3" y="10.899999999999999" width="21.3" height="4.6" fill="#87929a"/><path d="M43,28.0 V7.5 Q43,4.5 46,4.5 H69 Q72,4.5 72,7.5 V28.0 Z" fill="none" stroke="#87929a" stroke-width="2"/><rect x="43" y="4.7" width="29" height="6.3" fill="#87929a"/></svg>
<svg style="left:2768px;top:156px" width="76" height="34" viewBox="0 0 76 34"><path d="M3,29.7 V22 Q3,19 6,19 H30 Q33,19 33,22 V29.7 Z" fill="none" stroke="#87929a" stroke-width="2"/><rect x="3" y="19.2" width="30" height="6.6" fill="#87929a"/><path d="M49.3,20.5 V6.5 Q49.3,3.5 52.3,3.5 H67.9 Q70.9,3.5 70.9,6.5 V20.5 Z" fill="#e6e7e9" stroke="#87929a" stroke-width="2"/><rect x="49.3" y="3.7" width="21.6" height="4.6" fill="#87929a"/><rect x="42" y="10.2" width="23.3" height="19.1" fill="#e6e7e9"/><path d="M43,28.3 V14.2 Q43,11.2 46,11.2 H61.3 Q64.3,11.2 64.3,14.2 V28.3 Z" fill="#e6e7e9" stroke="#87929a" stroke-width="2"/><rect x="43" y="11.399999999999999" width="21.3" height="4.6" fill="#87929a"/></svg>
<svg style="left:1462px;top:200px" width="42" height="36" viewBox="0 0 42 36"><rect x="13.2" y="5.1" width="25.5" height="27.9" fill="#fff" stroke="#cfd5dc" stroke-width="1.2"/><circle cx="13.1" cy="13.6" r="11.2" fill="#bb1a1a"/><path d="M8.3,8.8 L17.9,18.4 M17.9,8.8 L8.3,18.4" stroke="#fff" stroke-width="3.6"/></svg>
<svg style="left:1532px;top:196px" width="42" height="40" viewBox="0 0 42 40"><ellipse cx="25" cy="34.4" rx="15" ry="3" fill="#d3d9de" opacity="0.85"/><path d="M36,4 L27.5,12.5" stroke="#e9c5c6" stroke-width="4.4" stroke-linecap="round"/><path d="M21.6,12 Q27,12 28.8,17 L22.8,30.3 L16.2,36.8 L3.1,23.4 L16.8,14.5 Z" fill="#ede6cc" stroke="#e6dcc0" stroke-width="0.8" stroke-linejoin="round"/><path d="M18.3,14.8 L25.7,21.6 M15,18.3 L24,26.4" stroke="#d6c2aa" stroke-width="2.2" stroke-linecap="round"/></svg>
<svg style="left:1597px;top:204px" width="38" height="28" viewBox="0 0 38 28"><path d="M10,24.5 V5 Q10,1.5 13.5,1.5 H30 Q33.5,1.5 33.5,5 V24.5 Z" fill="#f6f8fb" stroke="#9aa6b2" stroke-width="1.3"/><path d="M10.6,2.2 H33 V8.5 H10.6 Z" fill="#d3e7fb"/><path d="M2,20.5 L9,13.5 L5.8,10.3 H16.5 V21 L13.3,17.8 L6.3,24.8 Z" fill="#e4e7eb" stroke="#8d98a3" stroke-width="1.3" stroke-linejoin="round"/></svg>
<svg style="left:1671px;top:200px" width="40" height="36" viewBox="0 0 40 36"><rect x="2" y="5.1" width="25.3" height="27.9" fill="#fff" stroke="#cfd5dc" stroke-width="1.2"/><path d="M17.5,22.5 L32.5,7.5" stroke="#e8b82c" stroke-width="3.6"/><path d="M32,8 L34.5,5.5" stroke="#3aa84a" stroke-width="3.6"/><path d="M34,6 L36,4" stroke="#d2323b" stroke-width="3.6" stroke-linecap="round"/><path d="M16.5,23.5 L18.5,21.5" stroke="#4a3a2a" stroke-width="2"/></svg>
<svg style="left:2612px;top:202px" width="40" height="32" viewBox="0 0 40 32"><g transform="translate(1.5,2.5) scale(1.0)"><circle cx="18" cy="13" r="5.2" fill="#1a9be6"/><path d="M8.5,10.5 A10.5,10.5 0 0 1 26,5.5" fill="none" stroke="#1a9be6" stroke-width="4"/><path d="M1,10.5 H10" stroke="#1a9be6" stroke-width="4"/><path d="M27.5,15.5 A10.5,10.5 0 0 1 10,20.5" fill="none" stroke="#1a9be6" stroke-width="4"/><path d="M26,15.5 H35" stroke="#1a9be6" stroke-width="4"/></g></svg>
<svg style="left:2812px;top:196px" width="40" height="40" viewBox="0 0 40 40"><path d="M17.9,8.8 A12.25,12.25 0 1 0 30.1,26.2" fill="none" stroke="#c3ccd6" stroke-width="8.2"/><path d="M17.9,8.8 A12.25,12.25 0 1 0 30.1,26.2" fill="none" stroke="#e8f0fa" stroke-width="5"/><path d="M34.6,3.6 V18 H19.5 Z" fill="#e8f0fa" stroke="#c3ccd6" stroke-width="1.5" stroke-linejoin="round"/></svg>
<div class="t" style="left:521.4px;top:15.9px;font-size:24px;letter-spacing:0.661px;color:#6b6f73;font-weight:normal;font-family:'Liberation Sans',sans-serif;">Go to file/function</div>
<div class="t" style="left:997.7px;top:13.6px;font-size:24.4px;letter-spacing:0.980px;color:#111;font-weight:normal;font-family:'Liberation Sans',sans-serif;">Addins</div>
<div class="t" style="left:2591.2px;top:13.8px;font-size:24.5px;letter-spacing:1.447px;color:#111;font-weight:normal;font-family:'Liberation Sans',sans-serif;">quarto-tutorials — ~</div>
<div class="t" style="left:79.0px;top:82.1px;font-size:24.2px;letter-spacing:1.880px;color:#111;font-weight:normal;font-family:'Liberation Sans',sans-serif;">computations-code-fold.qmd</div>
<div class="t" style="left:307.5px;top:129.8px;font-size:24.4px;letter-spacing:0.231px;color:#111;font-weight:normal;font-family:'Liberation Sans',sans-serif;">Render on Save</div>
<div class="t" style="left:688.0px;top:131.8px;font-size:24.4px;letter-spacing:0.560px;color:#111;font-weight:normal;font-family:'Liberation Sans',sans-serif;">Render</div>
<div class="t" style="left:1238.0px;top:132.3px;font-size:24.4px;letter-spacing:1.100px;color:#111;font-weight:normal;font-family:'Liberation Sans',sans-serif;">Run</div>
<div class="t" style="left:46.6px;top:181.6px;font-size:24.4px;letter-spacing:0.440px;color:#333;font-weight:normal;font-family:'Liberation Sans',sans-serif;">Source</div>
<div class="t" style="left:170.0px;top:181.6px;font-size:24.4px;letter-spacing:0.800px;color:#333;font-weight:normal;font-family:'Liberation Sans',sans-serif;">Visual</div>
<div class="t" style="left:486.0px;top:181.6px;font-size:24.4px;letter-spacing:1.640px;color:#333;font-weight:normal;font-family:'Liberation Sans',sans-serif;">Normal</div>
<div class="t" style="left:907.6px;top:181.6px;font-size:24.4px;letter-spacing:1.040px;color:#333;font-weight:normal;font-family:'Liberation Sans',sans-serif;">Format</div>
<div class="t" style="left:1055.8px;top:181.6px;font-size:24.4px;letter-spacing:1.160px;color:#333;font-weight:normal;font-family:'Liberation Sans',sans-serif;">Insert</div>
<div class="t" style="left:1188.8px;top:181.6px;font-size:24.4px;letter-spacing:1.250px;color:#333;font-weight:normal;font-family:'Liberation Sans',sans-serif;">Table</div>
<div class="t" style="left:31.0px;top:1679.4px;font-size:24.2px;letter-spacing:0.900px;color:#3d4852;font-weight:normal;font-family:'Liberation Sans',sans-serif;">(Top Level)</div>
<div class="t" style="left:1313.0px;top:1679.4px;font-size:24.2px;letter-spacing:1.300px;color:#3d4852;font-weight:normal;font-family:'Liberation Sans',sans-serif;">Quarto</div>
<div class="t" style="left:37.0px;top:1740.6px;font-size:25.2px;letter-spacing:0.250px;color:#111;font-weight:normal;font-family:'Liberation Sans',sans-serif;">Console</div>
<div class="t" style="left:1470.0px;top:81.4px;font-size:24.5px;letter-spacing:0.690px;color:#111;font-weight:bold;font-family:'Liberation Sans',sans-serif;">Environment</div>
<div class="t" style="left:1668.4px;top:81.4px;font-size:24.5px;letter-spacing:0.800px;color:#111;font-weight:bold;font-family:'Liberation Sans',sans-serif;">History</div>
<div class="t" style="left:1797.4px;top:81.4px;font-size:24.5px;letter-spacing:0.550px;color:#111;font-weight:bold;font-family:'Liberation Sans',sans-serif;">Connections</div>
<div class="t" style="left:1992.4px;top:81.4px;font-size:24.5px;letter-spacing:0.400px;color:#111;font-weight:bold;font-family:'Liberation Sans',sans-serif;">Build</div>
<div class="t" style="left:2093.6px;top:81.4px;font-size:24.5px;letter-spacing:0.600px;color:#111;font-weight:bold;font-family:'Liberation Sans',sans-serif;">Git</div>
<div class="t" style="left:2168.0px;top:81.4px;font-size:24.5px;letter-spacing:1.571px;color:#111;font-weight:bold;font-family:'Liberation Sans',sans-serif;">Tutorial</div>
<div class="t" style="left:1470.0px;top:157.0px;font-size:24.5px;letter-spacing:0.300px;color:#111;font-weight:bold;font-family:'Liberation Sans',sans-serif;">Files</div>
<div class="t" style="left:1566.3px;top:157.0px;font-size:24.5px;letter-spacing:0.025px;color:#111;font-weight:bold;font-family:'Liberation Sans',sans-serif;">Plots</div>
<div class="t" style="left:1666.0px;top:157.0px;font-size:24.5px;letter-spacing:0.200px;color:#111;font-weight:bold;font-family:'Liberation Sans',sans-serif;">Packages</div>
<div class="t" style="left:1820.0px;top:157.0px;font-size:24.5px;letter-spacing:1.167px;color:#111;font-weight:bold;font-family:'Liberation Sans',sans-serif;">Help</div>
<div class="t" style="left:1916.7px;top:157.0px;font-size:24.5px;letter-spacing:1.080px;color:#111;font-weight:bold;font-family:'Liberation Sans',sans-serif;">Viewer</div>
<div class="t" style="left:2040.0px;top:157.0px;font-size:24.5px;letter-spacing:0.818px;color:#111;font-weight:bold;font-family:'Liberation Sans',sans-serif;">Presentation</div>
<div class="t" style="left:1714.6px;top:204.8px;font-size:24.5px;letter-spacing:0.767px;color:#111;font-weight:normal;font-family:'Liberation Sans',sans-serif;">Edit</div>
<div class="t" style="left:2657.7px;top:204.9px;font-size:24.5px;letter-spacing:0.800px;color:#111;font-weight:normal;font-family:'Liberation Sans',sans-serif;">Publish</div>
<div class="t" style="left:65.3px;top:604.3px;font-size:36.5px;letter-spacing:0.882px;color:#111;font-weight:normal;font-family:'Liberation Sans',sans-serif;">This dataset contains a subset of the fuel economy data from the EPA.</div>
<div class="t" style="left:63.3px;top:655.8px;font-size:36.5px;letter-spacing:0.700px;color:#111;font-weight:normal;font-family:'Liberation Sans',sans-serif;">Specifically, we use the</div>
<div class="t" style="left:473.0px;top:664.0px;font-size:30px;letter-spacing:2.400px;color:#222;font-weight:normal;font-family:'Liberation Mono',monospace;">mpg</div>
<div class="t" style="left:546.4px;top:655.8px;font-size:36.5px;letter-spacing:1.187px;color:#111;font-weight:normal;font-family:'Liberation Sans',sans-serif;">dataset from the</div>
<div class="t" style="left:841.0px;top:655.8px;font-size:36.5px;letter-spacing:1.167px;color:#111;font-weight:bold;font-family:'Liberation Sans',sans-serif;">ggplot2</div>
<div class="t" style="left:993.3px;top:655.8px;font-size:36.5px;letter-spacing:0.557px;color:#111;font-weight:normal;font-family:'Liberation Sans',sans-serif;">package.</div>
<div class="t" style="left:64.3px;top:998.6px;font-size:36.5px;letter-spacing:1.097px;color:#111;font-weight:normal;font-family:'Liberation Sans',sans-serif;">The visualization below shows a positive, strong, and linear relationship</div>
<div class="t" style="left:62.3px;top:1050.9px;font-size:36.5px;letter-spacing:1.067px;color:#111;font-weight:normal;font-family:'Liberation Sans',sans-serif;">between the city and highway mileage of these cars. Additionally, mileage is</div>
<div class="t" style="left:62.3px;top:1102.7px;font-size:36.5px;letter-spacing:1.264px;color:#111;font-weight:normal;font-family:'Liberation Sans',sans-serif;">higher for cars with fewer cylinders.</div>
<div class="t" style="left:1510.4px;top:266.2px;font-size:69px;letter-spacing:0.322px;color:#212529;font-weight:normal;font-family:'Liberation Sans',sans-serif;-webkit-text-stroke:1.1px #212529;">Quarto Computations</div>
<div class="t" style="left:1512.0px;top:389.6px;font-size:39.5px;letter-spacing:-0.213px;color:#212529;font-weight:normal;font-family:'Liberation Sans',sans-serif;">This dataset contains a subset of the fuel economy data from the EPA.</div>
<div class="t" style="left:1511.4px;top:447.9px;font-size:39.5px;letter-spacing:-0.145px;color:#212529;font-weight:normal;font-family:'Liberation Sans',sans-serif;">Specifically we use the</div>
<div class="t" style="left:1923.0px;top:455.7px;font-size:34px;letter-spacing:0.550px;color:#9a4fbf;font-weight:normal;font-family:'Liberation Mono',monospace;">mpg</div>
<div class="t" style="left:2001.5px;top:447.9px;font-size:39.5px;letter-spacing:0.047px;color:#212529;font-weight:normal;font-family:'Liberation Sans',sans-serif;">dataset from the</div>
<div class="t" style="left:2297.4px;top:447.9px;font-size:39.5px;letter-spacing:0.450px;color:#212529;font-weight:bold;font-family:'Liberation Sans',sans-serif;">ggplot2</div>
<div class="t" style="left:2453.4px;top:447.9px;font-size:39.5px;letter-spacing:-0.300px;color:#212529;font-weight:normal;font-family:'Liberation Sans',sans-serif;">package.</div>
<div class="t" style="left:1512.0px;top:643.9px;font-size:39.5px;letter-spacing:-0.250px;color:#212529;font-weight:normal;font-family:'Liberation Sans',sans-serif;">The visualization below shows a positive, strong, and linear relationship</div>
<div class="t" style="left:1511.0px;top:702.2px;font-size:39.5px;letter-spacing:-0.132px;color:#212529;font-weight:normal;font-family:'Liberation Sans',sans-serif;">between the city and highway mileage of these cars. Additionally, mileage</div>
<div class="t" style="left:1511.0px;top:760.0px;font-size:39.5px;letter-spacing:-0.046px;color:#212529;font-weight:normal;font-family:'Liberation Sans',sans-serif;">is higher for cars with fewer cylinders.</div>
<div class="t" style="left:1553.4px;top:544.6px;font-size:40.5px;letter-spacing:-0.833px;color:#6c757d;font-weight:normal;font-family:'Liberation Sans',sans-serif;">Code</div>
<div class="t" style="left:1553.4px;top:856.1px;font-size:40.5px;letter-spacing:-0.833px;color:#6c757d;font-weight:normal;font-family:'Liberation Sans',sans-serif;">Code</div>
</body></html>
